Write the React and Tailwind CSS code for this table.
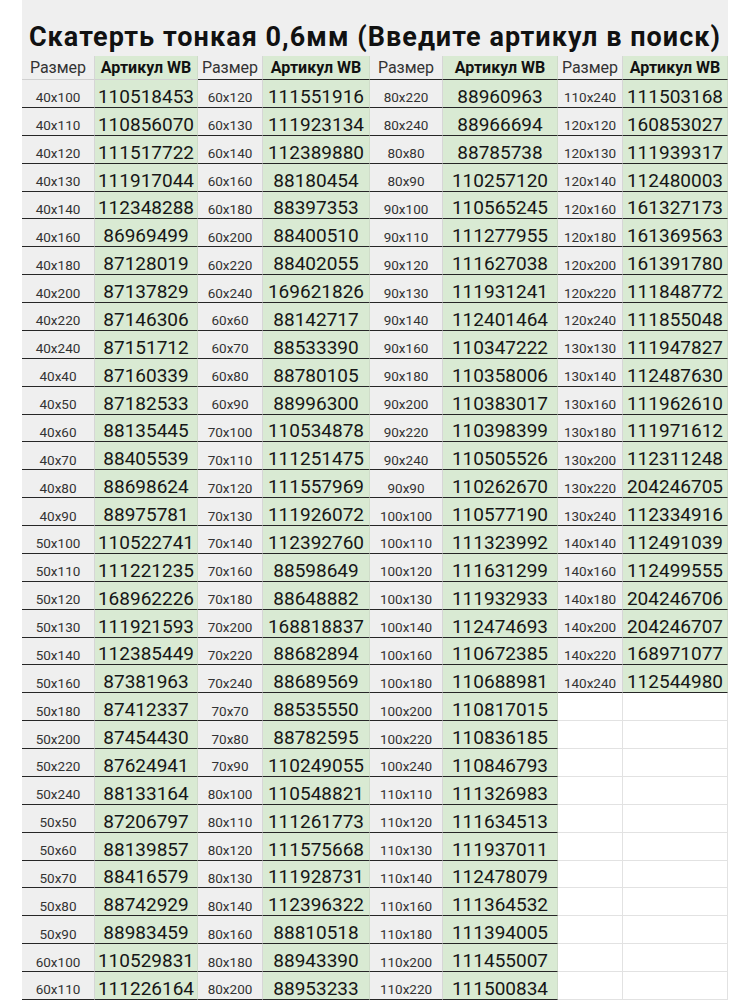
import React from 'react';

const pairs = [
  {
    sizes: ['40x100','40x110','40x120','40x130','40x140','40x160','40x180','40x200','40x220','40x240','40x40','40x50','40x60','40x70','40x80','40x90','50x100','50x110','50x120','50x130','50x140','50x160','50x180','50x200','50x220','50x240','50x50','50x60','50x70','50x80','50x90','60x100','60x110'],
    codes: ['110518453','110856070','111517722','111917044','112348288','86969499','87128019','87137829','87146306','87151712','87160339','87182533','88135445','88405539','88698624','88975781','110522741','111221235','168962226','111921593','112385449','87381963','87412337','87454430','87624941','88133164','87206797','88139857','88416579','88742929','88983459','110529831','111226164'],
  },
  {
    sizes: ['60x120','60x130','60x140','60x160','60x180','60x200','60x220','60x240','60x60','60x70','60x80','60x90','70x100','70x110','70x120','70x130','70x140','70x160','70x180','70x200','70x220','70x240','70x70','70x80','70x90','80x100','80x110','80x120','80x130','80x140','80x160','80x180','80x200'],
    codes: ['111551916','111923134','112389880','88180454','88397353','88400510','88402055','169621826','88142717','88533390','88780105','88996300','110534878','111251475','111557969','111926072','112392760','88598649','88648882','168818837','88682894','88689569','88535550','88782595','110249055','110548821','111261773','111575668','111928731','112396322','88810518','88943390','88953233'],
  },
  {
    sizes: ['80x220','80x240','80x80','80x90','90x100','90x110','90x120','90x130','90x140','90x160','90x180','90x200','90x220','90x240','90x90','100x100','100x110','100x120','100x130','100x140','100x160','100x180','100x200','100x220','100x240','110x110','110x120','110x130','110x140','110x160','110x180','110x200','110x220'],
    codes: ['88960963','88966694','88785738','110257120','110565245','111277955','111627038','111931241','112401464','110347222','110358006','110383017','110398399','110505526','110262670','110577190','111323992','111631299','111932933','112474693','110672385','110688981','110817015','110836185','110846793','111326983','111634513','111937011','112478079','111364532','111394005','111455007','111500834'],
  },
  {
    sizes: ['110x240','120x120','120x130','120x140','120x160','120x180','120x200','120x220','120x240','130x130','130x140','130x160','130x180','130x200','130x220','130x240','140x140','140x160','140x180','140x200','140x220','140x240'],
    codes: ['111503168','160853027','111939317','112480003','161327173','161369563','161391780','111848772','111855048','111947827','112487630','111962610','111971612','112311248','204246705','112334916','112491039','112499555','204246706','204246707','168971077','112544980'],
  },
];

const rows = Array.from({ length: 33 }, (_, i) => i);

const SizeCell = ({ value }) =>
  value ? (
    <div className="h-[27.875px] flex items-end justify-center pb-[2px] bg-[#efefef] border-r border-r-[#d6d6d6] border-b-[1.5px] border-b-[#262626] text-[13.5px] leading-none text-[#333]">
      {value}
    </div>
  ) : (
    <div className="h-[27.875px] bg-white border-r border-r-[#e2e2e2] border-b border-b-[#e2e2e2]" />
  );

const CodeCell = ({ value }) =>
  value ? (
    <div className="h-[27.875px] flex items-end justify-center pb-[1px] bg-[#d9ead3] border-r border-r-[#cfdcc9] border-b-[1.5px] border-b-[#262626] text-[19px] leading-none text-[#161616]">
      {value}
    </div>
  ) : (
    <div className="h-[27.875px] bg-white border-r border-r-[#e2e2e2] border-b border-b-[#e2e2e2]" />
  );

export default function App() {
  return (
    <div className="w-[750px] h-[1000px] overflow-hidden bg-white font-['Roboto','Liberation_Sans',sans-serif]">
      <div className="ml-[22px] w-[706px]">
        {/* Title */}
        <div className="h-[56px] bg-[#efefef] pt-[24px] text-center whitespace-nowrap text-[27px] leading-[27px] tracking-[1.05px] font-bold text-[#111]">
          Скатерть тонкая 0,6мм (Введите артикул в поиск)
        </div>

        <div className="grid grid-cols-[73px_103px_65px_107px_73px_115px_65px_105px]">
          {/* Header */}
          {pairs.map((p, idx) => (
            <React.Fragment key={'h' + idx}>
              <div
                className={`h-[24px] flex items-center justify-center bg-[#efefef] border-r border-r-[#d6d6d6] text-[16px] text-[#333] ${
                  idx === 0 ? 'border-b border-b-[#d0d0d0]' : 'border-b-[1.5px] border-b-[#262626]'
                }`}
              >
                Размер
              </div>
              <div
                className={`h-[24px] flex items-center justify-center bg-[#d9ead3] border-r border-r-[#cfdcc9] text-[16px] font-bold text-[#111] ${
                  idx === 0 ? 'border-b border-b-[#d0d0d0]' : 'border-b-[1.5px] border-b-[#262626]'
                }`}
              >
                Артикул WB
              </div>
            </React.Fragment>
          ))}

          {/* Rows */}
          {rows.map((i) =>
            pairs.map((p, idx) => (
              <React.Fragment key={i + '-' + idx}>
                <SizeCell value={p.sizes[i]} />
                <CodeCell value={p.codes[i]} />
              </React.Fragment>
            ))
          )}
        </div>
      </div>
    </div>
  );
}
